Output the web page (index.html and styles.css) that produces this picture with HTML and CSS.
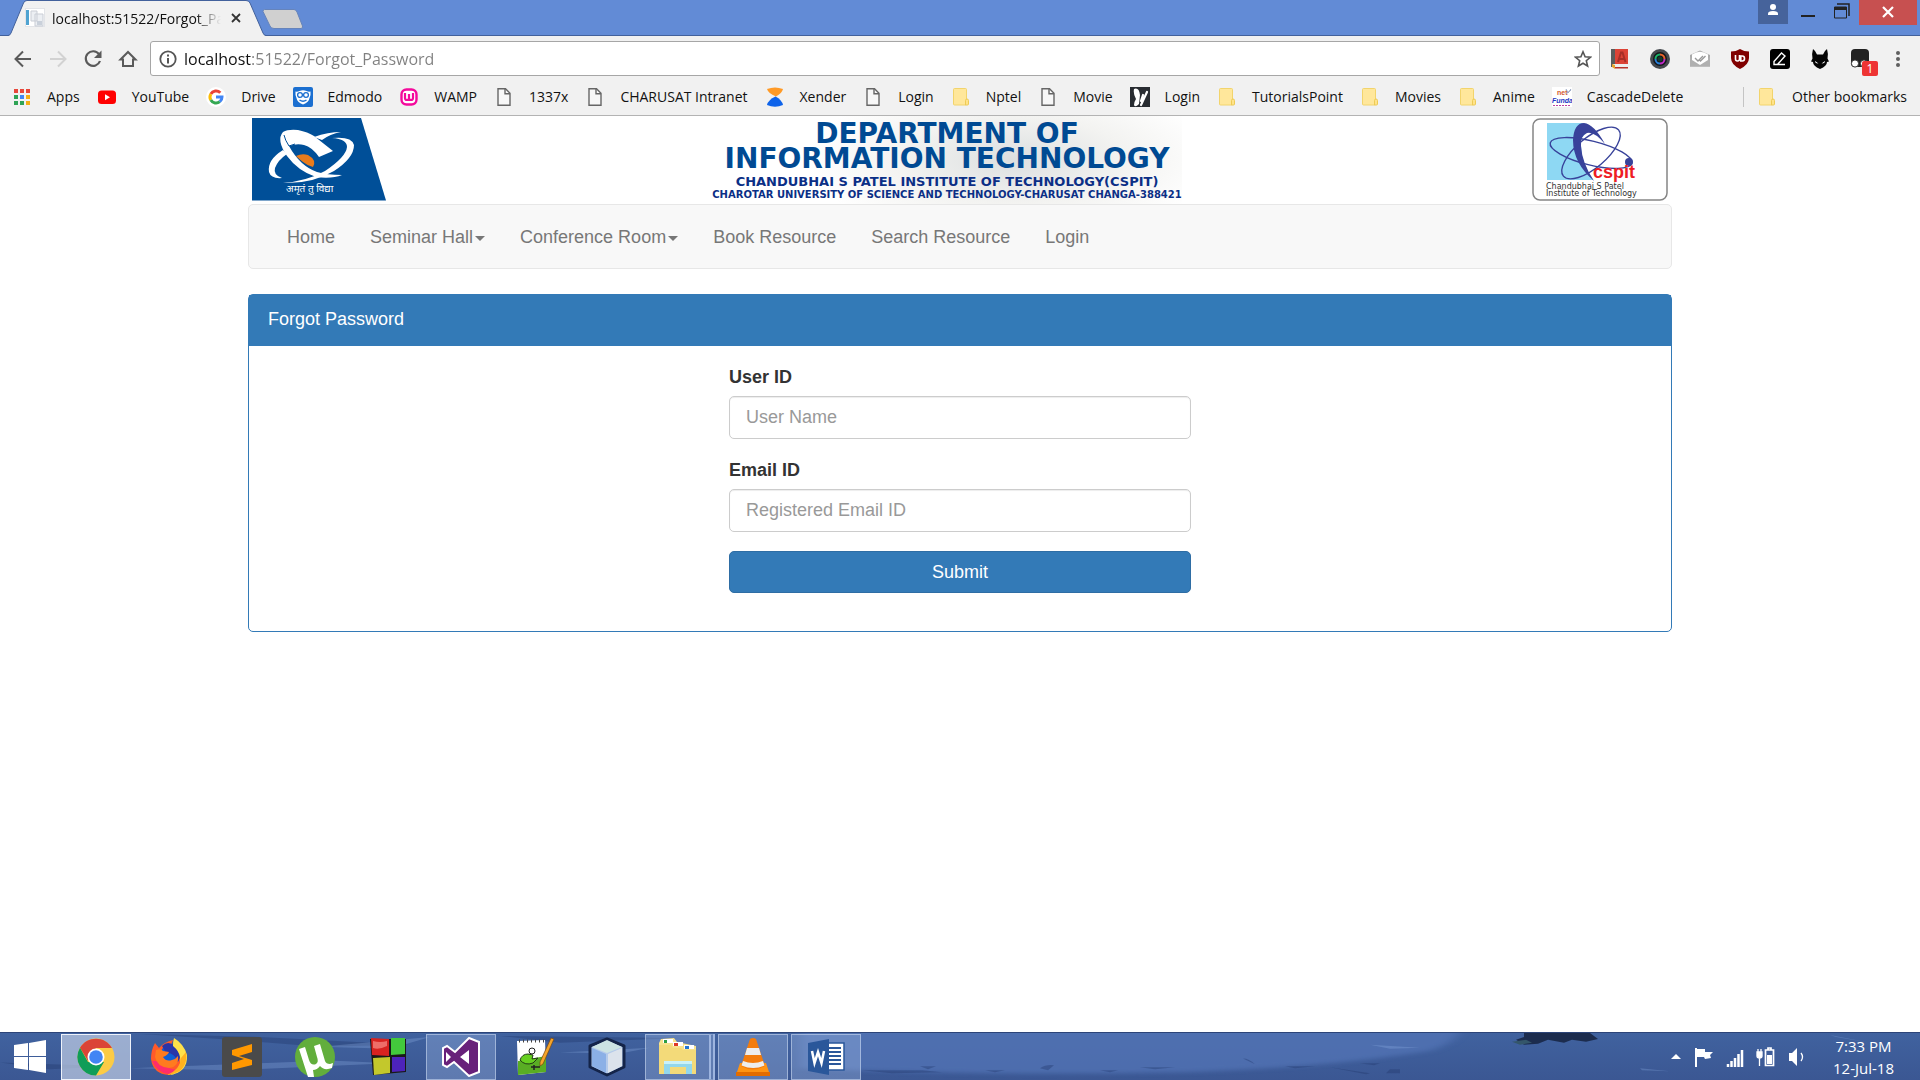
FILE: index.html
```html
<!DOCTYPE html>
<html lang="en">
<head>
<meta charset="utf-8">
<title>localhost:51522/Forgot_Password</title>
<link rel="stylesheet" href="styles.css">
</head>
<body>
<svg class="defs" aria-hidden="true">
  <symbol id="doc" viewBox="0 0 20 20"><path d="M4 1.700h7.500l4.500 4.500v12.100H4z" fill="#f7f7f7" stroke="#666" stroke-width="1.400"/><path d="M11 2v4.700h5" fill="none" stroke="#666" stroke-width="1.400"/></symbol>
  <symbol id="folder" viewBox="0 0 20 20"><rect x="2.500" y="1.500" width="13" height="16.500" rx="1" fill="#ffe79b" stroke="#f2d46c"/><path d="M14.500 18v-4.500a1.500 1.500 0 0 1 3 0V17a1 1 0 0 1-1 1z" fill="#ffe38a" stroke="#eecb55"/></symbol>
</svg>

<header class="browser">
  <div class="titlebar">
    <div class="tab">
      <svg class="tab-shape" width="258" height="36" viewBox="0 0 258 36"><path d="M0 36Q2 35.500 3 33L15.500 3Q16.500.5 19 .5H238Q241 .5 242 3L255 33Q256 35.500 258 36z" fill="#f1f1f1"/><path d="M0 35.500Q2 35.500 3 33L15.500 3Q16.500.5 19 .5H238Q241 .5 242 3L255 33Q256 35.500 258 35.500" fill="none" stroke="#42619c"/></svg>
      <svg class="tab-icon" width="20" height="20" viewBox="0 0 20 20"><rect x=".5" y=".5" width="19" height="18" fill="#fff" stroke="#e2e4e8"/><rect x="1" y="2" width="3" height="15" fill="#4fa3d1"/><path d="M6 3h6v10H6zM10 6h8v12h-8z" fill="#eceff3" stroke="#c9cdd5"/><path d="M12 13h5v4h-5z" fill="#c9d0da"/></svg>
      <span class="tab-title">localhost:51522/Forgot_Password</span>
      <button class="tab-close" aria-label="Close tab"><svg width="10" height="10" viewBox="0 0 10 10"><path d="M1 1l8 8M9 1L1 9" stroke="#333" stroke-width="1.800"/></svg></button>
    </div>
    <button class="new-tab" aria-label="New tab"><svg width="42" height="20" viewBox="0 0 42 20"><path d="M2.500.5H32Q34 .5 35 3L40.500 17Q41 19.500 39 19.500H12Q9 19.500 8 17L1 2.500Q1 .5 2.500 .5z" fill="#d0d0d0" stroke="#6684bb"/></svg></button>
    <div class="window-controls">
      <button class="avatar" aria-label="Profile"><svg width="12" height="12" viewBox="0 0 12 12" fill="#fff"><circle cx="6" cy="3" r="3"/><path d="M1 11V9.500Q1 7 6 7t5 2.500V11z"/></svg></button>
      <button class="win-btn" aria-label="Minimize"><svg width="16" height="20" viewBox="0 0 16 20"><path d="M1 15h14v2H1z" fill="#222"/></svg></button>
      <button class="win-btn restore" aria-label="Restore"><svg width="16" height="20" viewBox="0 0 16 20"><path d="M3 4h12v12" fill="none" stroke="#222" stroke-width="1.500"/><path d="M.5 7h12v11H.5z" fill="none" stroke="#222"/><path d="M0 7h13v3H0z" fill="#222"/></svg></button>
      <button class="win-close" aria-label="Close"><svg width="12" height="12" viewBox="0 0 12 12"><path d="M1 1l10 10M11 1L1 11" stroke="#fff" stroke-width="2.200"/></svg></button>
    </div>
  </div>

  <div class="toolbar">
    <button aria-label="Back"><svg width="24" height="24" viewBox="0 0 24 24"><path d="M20 12H5M12 4.500L4.500 12l7.500 7.500" fill="none" stroke="#5a5a5a" stroke-width="2"/></svg></button>
    <button aria-label="Forward"><svg width="24" height="24" viewBox="0 0 24 24"><path d="M4 12h15M12 4.500l7.500 7.500-7.500 7.500" fill="none" stroke="#d2d2d2" stroke-width="2"/></svg></button>
    <button aria-label="Reload"><svg width="24" height="24" viewBox="0 0 24 24"><path d="M18 7.200A7.300 7.300 0 1 0 19 14" fill="none" stroke="#5a5a5a" stroke-width="2.200"/><path d="M20.500 3.500V11H13z" fill="#5a5a5a"/></svg></button>
    <button aria-label="Home"><svg width="24" height="24" viewBox="0 0 24 24"><path d="M4.500 12.500L12 5l7.500 7.500H17V19H7v-6.500z" fill="none" stroke="#5a5a5a" stroke-width="2"/></svg></button>
    <div class="omnibox">
      <svg width="18" height="18" viewBox="0 0 18 18"><circle cx="9" cy="9" r="7.700" fill="none" stroke="#555" stroke-width="1.800"/><path d="M8 8h2v5.500H8zM8 4.500h2v2H8z" fill="#555"/></svg>
      <input class="url" type="text" value="localhost:51522/Forgot_Password" aria-label="Address">
      <svg width="18" height="18" viewBox="0 0 18 18"><path d="M9 1.800l2.100 5 5.400.4-4.200 3.500 1.300 5.300L9 13.200 4.400 16l1.300-5.300L1.500 7.200l5.400-.4z" fill="none" stroke="#555" stroke-width="1.600"/></svg>
    </div>
    <div class="extensions">
      <svg width="20" height="20" viewBox="0 0 20 20"><path d="M1 0h17v15H1z" fill="#dc4336"/><path d="M1 0h4v18H1z" fill="#5a5c5c"/><path d="M3 15h15v4H3z" fill="#eee"/><path d="M5 18h13v1.500H5z" fill="#b83329"/><path d="M2 15l3 1v4l-3-2z" fill="#e8a52c"/><path d="M8 13L11 3.500h1.500L15.500 13M9 10h6" fill="none" stroke="#a82f27" stroke-width="2"/></svg>
      <svg width="20" height="20" viewBox="0 0 20 20"><circle cx="10" cy="10" r="10" fill="#45494e"/><circle cx="10" cy="10" r="7" fill="#15171a"/><path d="M5.500 10A4.500 4.500 0 0 1 10 5.500" fill="none" stroke="#19b36a" stroke-width="2"/><path d="M10 5.500A4.500 4.500 0 0 1 14.500 10" fill="none" stroke="#e8632b" stroke-width="2"/><path d="M14.500 10A4.500 4.500 0 0 1 10 14.500" fill="none" stroke="#c02bc9" stroke-width="2"/><path d="M10 14.500A4.500 4.500 0 0 1 5.500 10" fill="none" stroke="#287fd8" stroke-width="2"/><circle cx="10" cy="10" r="2.500" fill="#173a2c"/></svg>
      <svg width="20" height="20" viewBox="0 0 20 20"><path d="M0 6l10-4.500L20 6v11.500H0z" fill="#aaa"/><path d="M2 5.500Q10 0 18 5.500V10l-8 5-8-5z" fill="#fff"/><path d="M0 8l10 6 10-6v9.500H0z" fill="#b0b0b0"/><path d="M2 7h16v4l-8 5-8-5z" fill="#fff"/><path d="M5 9l3 3 5-5M9.500 11l1 1 5-5" fill="none" stroke="#999" stroke-width="1.400"/></svg>
      <svg width="20" height="20" viewBox="0 0 20 20"><path d="M10 0Q14 2.500 19 2.500V9Q19 15.500 10 20 1 15.500 1 9V2.500Q6 2.500 10 0z" fill="#800000"/><path d="M5.500 6v4q0 2 2 2t2-2V6M10.800 7h1.500q2.200 0 2.200 2.400T12.300 12h-1.500z" fill="none" stroke="#fff" stroke-width="1.600"/></svg>
      <svg width="20" height="20" viewBox="0 0 20 20"><rect width="20" height="20" rx="3" fill="#000"/><path d="M4 12.500L11.500 4 15 7l-7.500 8.500H4zM4 15.500h11" fill="none" stroke="#fff" stroke-width="1.400"/></svg>
      <svg width="20" height="20" viewBox="0 0 20 20"><path d="M3 0q2 1 4 5.500h6Q15 1 17 0q1.500 5 .5 9.500L19 12.500l-2 .5q0 4-7 7-7-3-7-7l-2-.5 1.500-3Q1.500 5 3 0z" fill="#050505"/><path d="M5 12l3.500 2.500q-3.500 0-3.500-2.500zM15 12l-3.500 2.500q3.500 0 3.500-2.500z" fill="#fff"/></svg>
      <span class="monkey"><svg width="20" height="20" viewBox="0 0 20 20"><rect x="1" y="0" width="18" height="18" rx="4" fill="#222"/><circle cx="5" cy="14.500" r="3.600" fill="#fff" stroke="#333"/><circle cx="14" cy="14.500" r="3.600" fill="#fff" stroke="#333"/></svg><b class="badge">1</b></span>
      <svg width="16" height="20" viewBox="0 0 16 20" fill="#5f5f5f"><circle cx="8" cy="4" r="2"/><circle cx="8" cy="10" r="2"/><circle cx="8" cy="16" r="2"/></svg>
    </div>
  </div>

  <nav class="bookmarks" aria-label="Bookmarks">
    <a href="#"><svg viewBox="0 0 20 20"><path d="M2 2h4v4H2zM8 2h4v4H8zM14 2h4v4h-4z" fill="#e8473a"/><path d="M2 8h4v4H2zM2 14h4v4H2z" fill="#2fa355"/><path d="M8 8h4v4H8z" fill="#4285f4"/><path d="M8 14h4v4H8z" fill="#2fa355"/><path d="M14 8h4v4h-4zM14 14h4v4h-4z" fill="#f5ae14"/></svg>Apps</a>
    <a href="#"><svg viewBox="0 0 20 20"><rect x="1" y="3.500" width="18" height="13.500" rx="3.500" fill="#f00"/><path d="M8 7.200v6l5-3z" fill="#fff"/></svg>YouTube</a>
    <a href="#"><svg viewBox="0 0 20 20"><circle cx="10" cy="10" r="10" fill="#fff"/><g fill="none" stroke-width="3"><path d="M14.300 5.700A6 6 0 0 0 4.800 7" stroke="#ea4335"/><path d="M4.800 7a6 6 0 0 0 0 6" stroke="#fbbc05"/><path d="M4.800 13a6 6 0 0 0 9 1.700" stroke="#34a853"/><path d="M13.800 14.700A6 6 0 0 0 16 10h-6" stroke="#4285f4"/></g></svg>Drive</a>
    <a href="#"><svg viewBox="0 0 20 20"><rect width="20" height="20" rx="2" fill="#1b6fd0"/><path d="M2.500 4.500q2 .5 4-.5 3.500-1.500 7 0 2 1 4 .5.5 4-1 6.500-.5 4-6.500 6.500Q4 15 3.500 11 2 8.500 2.500 4.500z" fill="#fff"/><circle cx="7" cy="8" r="2.400" fill="#fff" stroke="#1b6fd0" stroke-width="1.300"/><circle cx="13" cy="8" r="2.400" fill="#fff" stroke="#1b6fd0" stroke-width="1.300"/><path d="M6.500 13q3.500 2.500 7 0" fill="none" stroke="#1b6fd0" stroke-width="1.500"/></svg>Edmodo</a>
    <a href="#"><svg viewBox="0 0 20 20"><rect x="2.500" y="2.500" width="15" height="15" rx="5" fill="#fff" stroke="#f40a9c" stroke-width="2.400"/><path d="M6 6v5q0 2 2 2t2-2V7v4q0 2 2 2t2-2V6" fill="none" stroke="#f40a9c" stroke-width="2.200"/></svg>WAMP</a>
    <a href="#"><svg><use href="#doc"/></svg>1337x</a>
    <a href="#"><svg><use href="#doc"/></svg>CHARUSAT Intranet</a>
    <a href="#"><svg viewBox="0 0 20 20"><path d="M2 2q8-3 16 0-1 4-7 7.500Q3 6 2 2z" fill="#ff9a26"/><path d="M10.500 9.500Q17 13 18 18q-8 3.500-16 0 1-5 8.500-8.500z" fill="#0e63ea"/></svg>Xender</a>
    <a href="#"><svg><use href="#doc"/></svg>Login</a>
    <a href="#"><svg><use href="#folder"/></svg>Nptel</a>
    <a href="#"><svg><use href="#doc"/></svg>Movie</a>
    <a href="#"><svg viewBox="0 0 20 20"><path d="M0 0h20v20H0z" fill="#282c31"/><path d="M4 2q5-2 6 6l-1 9q-4 4-5 1 0-3 2-6-3-5-2-10z" fill="#fff"/><path d="M17 5l-6 13M13 8l-2 6" stroke="#fff" stroke-width="2.200" stroke-linecap="round"/></svg>Login</a>
    <a href="#"><svg><use href="#folder"/></svg>TutorialsPoint</a>
    <a href="#"><svg><use href="#folder"/></svg>Movies</a>
    <a href="#"><svg><use href="#folder"/></svg>Anime</a>
    <a href="#"><svg viewBox="0 0 20 20"><path d="M0 0h20v20H0z" fill="#fff"/><text x="5" y="8" class="funda-net">net</text><path d="M14 2l2 4 3-4M14 7l5-4" stroke="#9aa9c5" fill="none"/><text x="0" y="16" class="funda">Funda</text><path d="M1 18.500h17" stroke="#bb42a0" stroke-dasharray="2 1"/></svg>CascadeDelete</a>
    <a href="#" class="other"><svg><use href="#folder"/></svg>Other bookmarks</a>
  </nav>
</header>

<main class="container">
  <div class="banner">
    <svg class="charusat" width="134" height="83" viewBox="0 0 134 83" role="img" aria-label="CHARUSAT">
      <path d="M0 0h109l25 82.500H0z" fill="#004f98"/>
      <path d="M62 19Q76 14 89 14 78 16 70 22zM80 20q20-2 22 7 0 13-20 26Q60 66 31 65q24-2 42-12Q94 39 95 29q0-8-15-9zM31 32Q15 42 17 54q2 7 13 6-9-3-7-10 3-8 12-14z" fill="#fff"/>
      <path d="M31 14Q36 11 46 12q10 2 16 6l19 15-14 6Q60 29 52 27q-7-2-15 1 11 20 28 26 10 3 25 3-10 4-26 2Q46 53 35 38 24 22 31 14z" fill="#fff"/>
      <path d="M32 17q1 5 5 11l6-2" fill="none" stroke="#004f98"/>
      <path d="M44 38q6-3 12-1 9 5 5 12-5-1-10-5-4-3-7-6z" fill="#e87b1c"/>
      <text x="34" y="74" class="motto">अमृतं तु विद्या</text>
    </svg>
    <div class="dept">
      <div class="dept-name">DEPARTMENT OF</div>
      <div class="dept-name">INFORMATION TECHNOLOGY</div>
      <div class="dept-inst">CHANDUBHAI S PATEL INSTITUTE OF TECHNOLOGY(CSPIT)</div>
      <div class="dept-univ">CHAROTAR UNIVERSITY OF SCIENCE AND TECHNOLOGY-CHARUSAT CHANGA-388421</div>
    </div>
    <svg class="cspit" width="136" height="83" viewBox="0 0 136 83" role="img" aria-label="CSPIT">
      <rect x="1" y="1" width="134" height="81" rx="7" fill="#fff" stroke="#858585" stroke-width="1.500"/>
      <path d="M15 5h36L62 62H15z" fill="#8ed8f3"/>
      <path d="M62 63Q49 45 49 28 48 18 55 15q7-2 18 11L80 50z" fill="#fff"/>
      <path d="M62 63Q41 45 41 22 42 5 52 5q10 1 21 21Q62 13 55 15q-7 3-6 13 1 17 13 35z" fill="#38429a"/>
      <g fill="none" stroke="#38429a" stroke-width="1.400"><ellipse cx="59" cy="35" rx="42" ry="12" transform="rotate(14 59 35)"/><ellipse cx="59" cy="35" rx="36" ry="15" transform="rotate(-40 59 35)"/></g>
      <circle cx="97" cy="44" r="4" fill="#38429a"/>
      <text x="61" y="60" class="cspit-name">cspit</text>
      <text x="14" y="71" class="cspit-sub">Chandubhai S Patel</text>
      <text x="14" y="78" class="cspit-sub">Institute of Technology</text>
    </svg>
  </div>

  <nav class="navbar" aria-label="Main">
    <a href="#">Home</a>
    <a href="#">Seminar Hall<i class="caret"></i></a>
    <a href="#">Conference Room<i class="caret"></i></a>
    <a href="#">Book Resource</a>
    <a href="#">Search Resource</a>
    <a href="#">Login</a>
  </nav>

  <section class="panel">
    <h1 class="panel-heading">Forgot Password</h1>
    <form class="panel-body">
      <label for="user">User ID</label>
      <input class="control" id="user" type="text" placeholder="User Name">
      <label for="email">Email ID</label>
      <input class="control" id="email" type="text" placeholder="Registered Email ID">
      <button class="submit" type="button">Submit</button>
    </form>
  </section>
</main>

<footer class="taskbar">
  <svg class="water" viewBox="0 0 1920 48" preserveAspectRatio="none" aria-hidden="true">
    <defs><filter id="soft" x="-5%" y="-20%" width="110%" height="140%"><feGaussianBlur stdDeviation="6 2"/></filter></defs>
    <path d="M800-6h660q0 14-30 24-110 18-250 22-200 4-380-4z" fill="#5476b8" opacity=".7" filter="url(#soft)"/>
    <g fill="#23396f" opacity=".4"><path d="M140 1l120 3 150 8-90 2-100-8zM500 3l180 2-120 5zM0 30l110 4-60 3zM862 38h60l20 2-50 1zM920 34h16l-8 3zM985 38h20l-10 2zM1040 36q6-4 14-3l-6 5zM1100 38h18l-8 2zM1140 35h35l-20 2zM1243 26q6 0 12 6zM1285 34h30l-20 2zM1360 31h20l-6 2zM1390 37h10v4h-14zM1330 35l40 6-4 1z"/></g>
    <g fill="#8db0e4" opacity=".3"><path d="M130 36l200-8 60 3-160 7zM320 14l110-10-40 12zM560 20l90-5-30 6zM1370 12l50 3-30 1zM1640 36l30 3-28-1zM1830 2l40 8-34-6z"/></g>
    <path d="M1524 0h66l8 6-12 3-14-2-8 3-16-3-10 4-14 1-8-5 8-3z" fill="#1c2c4e"/>
    <path d="M1512 9l14-2 6 3-12 2z" fill="#34566a"/>
  </svg>
  <button class="start" aria-label="Start"><svg width="34" height="34" viewBox="0 0 34 34" fill="#fff"><path d="M1 5l14-2v13H1zM16 3l17-3v16H16zM1 17h14v13L1 28zM16 17h17v16l-17-3z"/></svg></button>
  <button class="task active" aria-label="Chrome"><svg viewBox="0 0 40 40"><circle cx="20" cy="20" r="18.500" fill="#fccb45"/><path d="M4 10.700A18.500 18.500 0 0 1 36 11H20l-8 13z" fill="#db4437"/><path d="M4 10.700A18.500 18.500 0 0 0 20 38.500L28 25l-16 0z" fill="#0f9d58"/><circle cx="20" cy="20" r="8.500" fill="#fff"/><circle cx="20" cy="20" r="6.800" fill="#4285f4"/></svg></button>
  <button class="task" aria-label="Firefox"><svg viewBox="0 0 40 40"><path d="M6 6l4 5q5-6 14-8l-2 5q10 0 13 12 0 14-15 18Q4 37 2 22q0-9 4-16z" fill="#ff5a2a"/><path d="M3 24q5 12 17 13 8 0 13-5-14 3-21-8z" fill="#ff2d6b"/><circle cx="21" cy="18" r="10" fill="#0f5fd6"/><path d="M13 9q6-6 13 0 8 7 3 16-4-10-12-9z" fill="#2a35a8"/><path d="M7 13q5-2 7 1l6 1q-1 3-6 5 3 5 9 3 4-1 6-4 1 11-9 12-12-1-14-11z" fill="#ff7b1f"/><path d="M25 1q10 6 13 17 1 17-17 20 12-6 10-18-1-6-7-11Q24 4 25 1z" fill="#ffe14a"/><path d="M37 15q2 14-8 20-6 3-11 3 13-5 14-17z" fill="#ffb21f"/></svg></button>
  <button class="task" aria-label="Sublime Text"><svg viewBox="0 0 40 40"><rect width="40" height="40" rx="3" fill="#4a4a4a"/><path d="M10 13l20-6v8l-13 4 13 4v5L10 33v-7l12-4-12-4z" fill="#ff9800"/></svg></button>
  <button class="task" aria-label="uTorrent"><svg viewBox="0 0 40 40"><circle cx="20" cy="20" r="20" fill="#62ae3c"/><path d="M4 12l6-2 4 13q2 6 7 4 3-2 1-7L19 9l6-2 5 17q1 3 5 3l3-1-1 5q-8 3-12-2-3 4-7 4l1 7h-6z" fill="#fff"/></svg></button>
  <button class="task" aria-label="Blocks"><svg viewBox="0 0 40 40"><path d="M2 2h36v33L5 38z" fill="#191919"/><path d="M3 1l18 1v17L4 18z" fill="#d82320"/><path d="M5 4q7 2 14 0v5q-8 4-14 2z" fill="#ee6e68"/><path d="M23 1h14v16l-14 1z" fill="#43c93c"/><path d="M5 21l17-1v16L6 38z" fill="#c3c82c"/><path d="M24 20h13v14l-13 1z" fill="#4d23bb"/></svg></button>
  <button class="task open" aria-label="Visual Studio"><svg viewBox="0 0 40 40"><path d="M28 1l10 4v30l-10 4-15-14-7 5-4-2V11l4-2 8 6z" fill="#68217a" stroke="#fff" stroke-width="2"/><path d="M5 15l5 5-5 5zM28 13v14l-9-7z" fill="#fff"/></svg></button>
  <button class="task" aria-label="Notepad++"><svg viewBox="0 0 40 40"><path d="M3 4l28-1 1 32-28 3z" fill="#fff"/><path d="M4 24l28-5v16L4 38z" fill="#59ad24"/><path d="M5 4h26" stroke="#444" stroke-width="3" stroke-dasharray="1 3"/><path d="M6 23q2-6 8-6l5 1-1 4 6-1-5 5q-8 3-13-3z" fill="#66cf20" stroke="#213b16"/><circle cx="18" cy="14" r="3" fill="#fff" stroke="#222"/><path d="M17 30h9M20 28v5" stroke="#222" stroke-width="1.500"/><path d="M37 1l3 1-11 25-3 2v-4z" fill="#f5a42b" stroke="#754613" stroke-width=".7"/></svg></button>
  <button class="task" aria-label="VirtualBox"><svg viewBox="0 0 40 40"><path d="M20 2l17 7v21l-17 8-17-8V9z" fill="#b4caea" stroke="#142449" stroke-width="3" stroke-linejoin="round"/><path d="M20 3l15 7-15 6-15-6z" fill="#cce3e3"/><path d="M5 11l14 6v19L5 29z" fill="#8bb0e6"/><path d="M35 11l-14 6v19l14-7z" fill="#dce3ec"/></svg></button>
  <button class="task open stack" aria-label="File Explorer"><svg viewBox="0 0 40 40"><path d="M3 2l13-1 3 4 19 4v28H1V6z" fill="#f7e28e"/><path d="M5 2h10v4H5zM15 5h10v4H15zM26 8h10v4H26z" fill="#fff"/><path d="M6 3h3v3H6z" fill="#2d9e45"/><path d="M16 6h4v3h-4z" fill="#dd3827"/><path d="M27 9h4v3h-4z" fill="#2577d3"/><path d="M1 8h12l2 3h8l2 2h13v24H1z" fill="#f3da79"/><path d="M6 24h28v13h-6v-7H12v7H6z" fill="#92d7ed"/><path d="M6 24h28v3H6z" fill="#caf1f8"/></svg></button>
  <button class="task open" aria-label="VLC"><svg viewBox="0 0 40 40"><path d="M7 26h26l4 12H3z" fill="#ff9413"/><path d="M3 35h34v4H3z" fill="#e36c00"/><path d="M17 2q3-2 6 0l9 27q-12 7-24 0z" fill="#f47c0c"/><path d="M14 11h12l2 7H12zM10 24q10 4 20 0l1.500 4.500q-11 5-23 0z" fill="#ededed"/></svg></button>
  <button class="task open" aria-label="Word"><svg viewBox="0 0 40 40"><path d="M21 6h17v27H21z" fill="#fff" stroke="#2a579a" stroke-width="1.500"/><path d="M23 11h12M23 15h12M23 19h12M23 23h12M23 27h12" stroke="#2a579a" stroke-width="2"/><path d="M2 6l21-4v36L2 34z" fill="#2a579a"/><path d="M6 14l2.500 12L12 15l3.500 11L18 14" fill="none" stroke="#fff" stroke-width="2.500"/></svg></button>
  <div class="tray">
    <svg width="12" height="20" viewBox="0 0 12 20"><path d="M1 12l5-5 5 5z" fill="#fff"/></svg>
    <svg width="20" height="20" viewBox="0 0 20 20"><path d="M2 1v19" stroke="#fff" stroke-width="2"/><path d="M3 2h8v3h8l-3 3 1 3-6 1-1-2H3z" fill="#fff"/></svg>
    <svg width="18" height="20" viewBox="0 0 18 20"><path d="M2 20v-3M5.500 20v-6M9 20v-9M12.500 20V7M16 20V3" stroke="#fff" stroke-width="2.500"/></svg>
    <svg width="20" height="20" viewBox="0 0 20 20"><path d="M1 5h5v4q0 2-2.500 2T1 9zM3.500 10v9M2 2v3M5 2v3" fill="#fff" stroke="#fff" stroke-width="1.300"/><path d="M9.500 3h8v15.500h-8zM12 1h3v2h-3z" fill="none" stroke="#fff" stroke-width="1.700"/><path d="M11 8h5v9h-5z" fill="#fff"/></svg>
    <svg width="20" height="20" viewBox="0 0 20 20"><path d="M1 6h3l5-5v18l-5-5H1z" fill="#fff"/><path d="M13 6q3 4 0 8" fill="none" stroke="#fff" stroke-width="1.300"/></svg>
    <div class="clock"><span>7:33 PM</span><span>12-Jul-18</span></div>
  </div>
</footer>
</body>
</html>
```
FILE: styles.css
```css
* { box-sizing: border-box; }

body {
  margin: 0;
  min-height: 100vh;
  display: flex;
  flex-direction: column;
  background: #fff;
  font-family: "Liberation Sans", Arial, sans-serif;
  font-size: 18px;
  color: #333;
}

button { border: 0; padding: 0; background: none; font: inherit; color: inherit; }
a { color: inherit; text-decoration: none; }
svg { display: block; flex: none; }
.defs { position: absolute; width: 0; height: 0; }

/* Browser chrome */
.browser {
  background: #f1f1f1;
  border-bottom: 1px solid #b3b3b3;
  font-family: "Open Sans", "Noto Sans", sans-serif;
  font-size: 14px;
  color: #111;
}

.titlebar {
  display: flex;
  align-items: flex-start;
  height: 36px;
  padding-left: 8px;
  background: #628bd6;
  border-bottom: 1px solid #42619c;
}

.tab {
  position: relative;
  display: flex;
  align-items: center;
  width: 258px;
  height: 36px;
  padding: 0 25px 0 17px;
}
.tab-shape { position: absolute; left: 0; top: 0; }
.tab-icon, .tab-title, .tab-close { position: relative; }
.tab-title {
  flex: 1;
  min-width: 0;
  margin: 0 10px 0 7px;
  overflow: hidden;
  white-space: nowrap;
  -webkit-mask-image: linear-gradient(to right, #000 85%, transparent);
  mask-image: linear-gradient(to right, #000 85%, transparent);
}
.new-tab { margin-top: 9px; margin-left: -4px; }

.window-controls { display: flex; margin-left: auto; padding-right: 3px; }
.avatar, .win-close { display: flex; justify-content: center; }
.avatar { width: 30px; height: 24px; padding-top: 4px; background: #46639b; }
.win-btn { display: flex; width: 34px; padding-left: 12px; }
.restore { width: 37px; }
.win-close { width: 58px; height: 25px; padding-top: 6px; background: #c75050; }

.toolbar {
  display: flex;
  align-items: center;
  gap: 11px;
  height: 45px;
  padding: 0 14px 0 11px;
}
.omnibox {
  flex: 1;
  display: flex;
  align-items: center;
  height: 35px;
  margin: 0 -1px;
  padding: 0 7px 0 8px;
  background: #fff;
  border: 1px solid #a6a6a6;
  border-radius: 3px;
}
.url {
  flex: 1;
  min-width: 0;
  margin: 0 7px;
  padding: 0;
  border: 0;
  outline: 0;
  font: 16px "Open Sans", "Noto Sans", sans-serif;
  background: linear-gradient(to right, #111 68px, #808080 68px);
  -webkit-background-clip: text;
  background-clip: text;
  -webkit-text-fill-color: transparent;
}
.extensions { display: flex; align-items: center; gap: 20px; }
.monkey { position: relative; }
.badge {
  position: absolute;
  left: 12px;
  top: 12px;
  width: 16px;
  height: 15px;
  border-radius: 2px;
  background: #ee3434;
  color: #fff;
  font-size: 12px;
  font-weight: 400;
  line-height: 15px;
  text-align: center;
}

.bookmarks {
  display: flex;
  align-items: center;
  gap: 17px;
  height: 34px;
  padding: 0 13px 3px 12px;
}
.bookmarks a { display: flex; align-items: center; gap: 15px; white-space: nowrap; }
.bookmarks svg { width: 20px; height: 20px; }
.bookmarks .other { margin-left: auto; padding-left: 13px; border-left: 1px solid #c4c4c4; }
.funda { font: italic bold 7px "Liberation Sans", sans-serif; fill: #2437c4; }
.funda-net { font: bold 7px "Liberation Sans", sans-serif; fill: #d3562c; }

/* Page */
.container { width: 100%; max-width: 1424px; margin: 0 auto; flex: 1; }

.banner {
  display: flex;
  justify-content: space-between;
  align-items: flex-start;
  padding: 2px 4px 3px;
}
.dept {
  margin: -2px 24px -3px 0;
  padding: 5px 0 3px;
  background: radial-gradient(ellipse 44% 90% at 64% 50%, #dcdfe0, #f3f3f1 55%, #fff);
  color: #004a93;
  font-family: "DejaVu Sans", sans-serif;
  font-weight: 700;
  text-align: center;
  white-space: nowrap;
}
.dept-name { font-size: 28px; line-height: 25px; }
.dept-inst { margin-top: 4px; font-size: 13px; line-height: 14px; color: #0b2f86; }
.dept-univ { font-size: 10px; line-height: 12px; color: #0b2f86; }
.motto { font: 10px "Noto Sans", sans-serif; fill: #fff; }
.cspit-name { font: bold 18px "Liberation Sans", sans-serif; fill: #ee1c25; }
.cspit-sub { font: 8px "DejaVu Sans", sans-serif; fill: #333; }

.navbar {
  display: flex;
  gap: 35px;
  height: 65px;
  padding: 20px 38px;
  background: #f8f8f8;
  border: 1px solid #e7e7e7;
  border-radius: 5px;
  color: #777;
  line-height: 24px;
  white-space: nowrap;
}
.caret {
  display: inline-block;
  margin-left: 2px;
  vertical-align: middle;
  border: 5px solid transparent;
  border-top-color: currentColor;
  border-bottom: 0;
}

.panel {
  margin: 25px 0;
  border: 1px solid #337ab7;
  border-radius: 5px;
}
.panel-heading {
  margin: 0;
  padding: 12px 19px 15px;
  background: #337ab7;
  color: #fff;
  font-size: 18px;
  font-weight: 400;
  line-height: 24px;
}
.panel-body {
  display: flex;
  flex-direction: column;
  width: 462px;
  max-width: 100%;
  margin: 0 auto;
  padding: 19px 0 38px;
}
.panel-body label { margin-bottom: 7px; font-weight: 700; line-height: 24px; }
.control {
  height: 43px;
  margin-bottom: 19px;
  padding: 0 16px;
  border: 1px solid #ccc;
  border-radius: 5px;
  box-shadow: inset 0 1px 1px rgba(0, 0, 0, .075);
  font: inherit;
}
.control::placeholder { color: #999; }
.submit {
  height: 42px;
  border: 1px solid #2e6da4;
  border-radius: 5px;
  background: #337ab7;
  color: #fff;
}

/* Taskbar */
.taskbar {
  position: relative;
  display: flex;
  align-items: center;
  gap: 3px;
  height: 48px;
  background: linear-gradient(#40629f, #3b5793);
  border-top: 1px solid #2c4478;
  color: #fff;
}
.water { position: absolute; inset: 0; width: 100%; height: 100%; overflow: hidden; }
.taskbar > button, .tray { position: relative; }
.start { width: 58px; padding-left: 13px; }
.task {
  display: flex;
  align-items: center;
  justify-content: center;
  width: 70px;
  height: 46px;
}
.task svg { width: 40px; height: 40px; }
.open { background: rgba(160, 185, 230, .35); border: 1px solid rgba(200, 215, 240, .6); }
.active { background: rgba(205, 215, 235, .65); border: 1px solid #eef2fa; }
.stack { border-right: 6px double #9db4df; }
.tray { display: flex; align-items: center; gap: 12px; margin-left: auto; padding-right: 26px; }
.clock {
  display: flex;
  flex-direction: column;
  align-items: center;
  margin-left: 13px;
  font: 15px/22px "Open Sans", "Noto Sans", sans-serif;
}
```
